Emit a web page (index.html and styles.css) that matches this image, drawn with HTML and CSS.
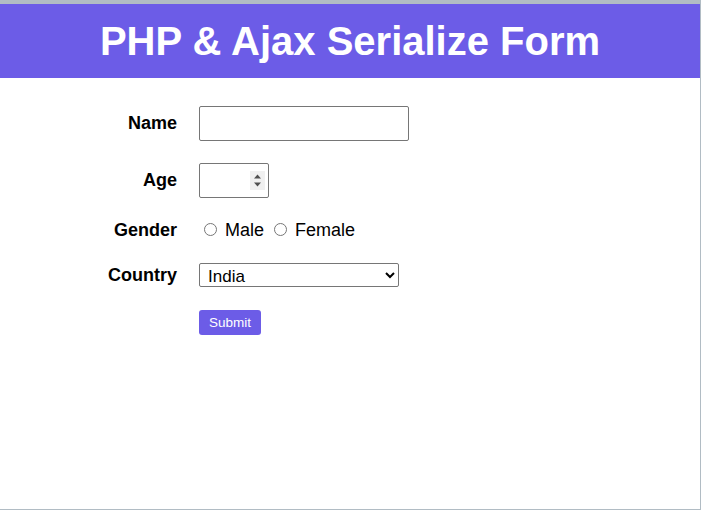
FILE: index.html
```html
<!DOCTYPE html>
<html lang="en">
<head>
<meta charset="utf-8">
<title>PHP &amp; Ajax Serialize Form</title>
<link rel="stylesheet" href="styles.css">
</head>
<body>
<div class="frame">
  <header class="header">
    <h1 class="title">PHP &amp; Ajax Serialize Form</h1>
  </header>
  <form class="form">
    <label class="label" for="name">Name</label>
    <div class="field"><input class="text-input" type="text" id="name" name="name"></div>

    <label class="label" for="age">Age</label>
    <div class="field">
      <span class="num-wrap">
        <input class="num-input" type="number" id="age" name="age">
        <span class="spin" aria-hidden="true">
          <svg width="15" height="19" viewBox="0 0 15 19"><path d="M7.5 3.5 L11 7.5 L4 7.5 Z" fill="#505050"/><path d="M4 11.5 L11 11.5 L7.5 15.5 Z" fill="#505050"/></svg>
        </span>
      </span>
    </div>

    <span class="label">Gender</span>
    <div class="field radios"><input class="radio" type="radio" name="gender" value="male"> Male <input class="radio" type="radio" name="gender" value="female"> Female</div>

    <label class="label" for="country">Country</label>
    <div class="field">
      <select class="select" id="country" name="country">
        <option>India</option>
        <option>Pakistan</option>
        <option>Bangladesh</option>
        <option>Nepal</option>
      </select>
    </div>

    <span class="label"></span>
    <div class="field"><button class="submit" type="button">Submit</button></div>
  </form>
</div>
</body>
</html>
```

FILE: styles.css
```css
html, body {
  margin: 0;
  padding: 0;
  background: #ffffff;
}

body {
  font-family: "Liberation Sans", Arial, sans-serif;
  color: #000000;
}

.frame {
  box-sizing: border-box;
  width: 701px;
  height: 510px;
  border-top: 4px solid #b1bcc4;
  border-right: 1px solid #b1bcc4;
  border-bottom: 1px solid #b1bcc4;
  background: #ffffff;
}

.header {
  background: #6c5ce7;
  height: 74px;
  display: flex;
  align-items: center;
  justify-content: center;
}

.title {
  margin: 0;
  color: #ffffff;
  font-size: 40px;
  font-weight: bold;
  line-height: 46px;
}

.form {
  display: grid;
  grid-template-columns: 177px auto;
  column-gap: 22px;
  row-gap: 22px;
  align-items: center;
  padding-top: 28px;
}

.label {
  text-align: right;
  font-size: 18px;
  font-weight: bold;
  line-height: 21px;
}

.field {
  display: flex;
  align-items: center;
}

.text-input,
.num-input {
  box-sizing: border-box;
  height: 35px;
  margin: 0;
  border: 1px solid #767676;
  border-radius: 2px;
  font-family: "Liberation Sans", Arial, sans-serif;
  font-size: 16px;
  padding: 0 6px;
  background: #ffffff;
}

.text-input {
  width: 210px;
}

.num-wrap {
  position: relative;
  display: block;
  width: 70px;
  height: 35px;
}

.num-input {
  width: 70px;
  -moz-appearance: textfield;
}

.num-input::-webkit-inner-spin-button,
.num-input::-webkit-outer-spin-button {
  -webkit-appearance: none;
  margin: 0;
}

.spin {
  position: absolute;
  left: 51px;
  top: 8px;
  width: 15px;
  height: 19px;
  background: #f0f0f0;
  display: block;
  pointer-events: none;
}

.spin svg {
  display: block;
}

.radios {
  display: block;
  font-size: 18px;
  line-height: 21px;
  white-space: pre;
}

.radio {
  width: 13px;
  height: 13px;
  margin: 3px 3px 0 5px;
}

.select {
  box-sizing: border-box;
  width: 200px;
  height: 24px;
  margin: 0;
  font-family: "Liberation Sans", Arial, sans-serif;
  font-size: 17px;
  border: 1px solid #767676;
  border-radius: 2px;
  background: #ffffff;
  color: #000000;
  padding: 2px 0 0 4px;
}

.submit {
  box-sizing: border-box;
  height: 25px;
  width: 62px;
  padding: 0;
  margin-top: 1px;
  border: none;
  border-radius: 3px;
  background: #6c5ce7;
  color: #ffffff;
  font-family: "Liberation Sans", Arial, sans-serif;
  font-size: 13.5px;
  cursor: pointer;
}
```
